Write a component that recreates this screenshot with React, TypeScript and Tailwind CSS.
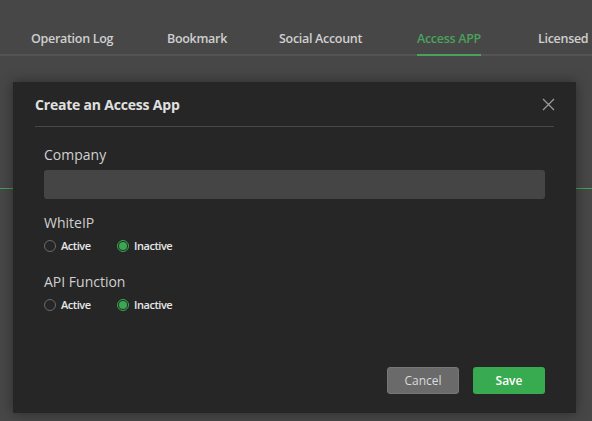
import React from "react";

const font = { fontFamily: '"Open Sans", "Noto Sans", sans-serif' };

function Radio({ checked, label, w }: { checked: boolean; label: string; w: string }) {
  return (
    <label className={"flex items-center gap-[5px] " + w}>
      {checked ? (
        <span className="w-[12px] h-[12px] rounded-full border border-[#3aa852] flex items-center justify-center">
          <span className="w-[8px] h-[8px] rounded-full bg-[#3aa852]" />
        </span>
      ) : (
        <span className="w-[12px] h-[12px] rounded-full border border-[#6a6a6a]" />
      )}
      <span className="text-[11px] font-semibold text-[#e6e6e6] tracking-[-0.45px]">{label}</span>
    </label>
  );
}

export default function App() {
  const tabs: [string, string][] = [
    ["Operation Log", "w-[136px]"],
    ["Bookmark", "w-[112px]"],
    ["Social Account", "w-[138px]"],
    ["Access APP", "w-[121px]"],
    ["Licensed Devices", "w-[120px]"],
  ];
  return (
    <div className="relative w-[592px] h-[421px] overflow-hidden bg-[#474747]" style={font}>
      <div className="flex pl-[31px] pt-[29px] border-b-2 border-[#545454] whitespace-nowrap">
        {tabs.map(([t, w]) => (
          <div key={t} className={"shrink-0 flex " + w}>
            <div
              className={
                "pb-[5px] text-[12.5px] leading-[20px] font-semibold tracking-[-0.3px] " +
                (t === "Access APP"
                  ? "text-[#4aa15c] border-b-2 border-[#4aa15c] -mb-[2px]"
                  : "text-[#cfcfcf]")
              }
            >
              {t}
            </div>
          </div>
        ))}
      </div>
      <div className="mt-[132px] h-px bg-[#42a055]" />

      <div className="absolute left-[13px] top-[82px] w-[563px] h-[331px] bg-[#262626] shadow-[0_0_12px_rgba(0,0,0,0.4)] flex flex-col">
        <div className="mx-[22px] flex items-center justify-between h-[45px] pt-[1px] border-b border-[#474747]">
          <span className="text-[14px] font-bold text-[#e0e0e0] tracking-[-0.2px]">Create an Access App</span>
          <svg width="13" height="13" viewBox="0 0 13 13" className="mr-[-1px]">
            <path d="M1 1 L12 12 M12 1 L1 12" stroke="#9a9a9a" strokeWidth="1.3" />
          </svg>
        </div>
        <div className="px-[31px] pt-[18px] flex flex-col">
          <div className="text-[14px] text-[#d0d0d0] leading-[20px]">Company</div>
          <div className="mt-[5px] h-[29px] rounded-[3px] bg-[#454545]" />
          <div className="mt-[14px] text-[14px] text-[#d0d0d0] leading-[20px]">WhiteIP</div>
          <div className="mt-[5px] flex">
            <Radio checked={false} label="Active" w="w-[73px]" />
            <Radio checked={true} label="Inactive" w="" />
          </div>
          <div className="mt-[17px] text-[14px] text-[#d0d0d0] leading-[20px]">API Function</div>
          <div className="mt-[5px] flex">
            <Radio checked={false} label="Active" w="w-[73px]" />
            <Radio checked={true} label="Inactive" w="" />
          </div>
        </div>
        <div className="mt-auto mb-[19px] px-[31px] flex justify-end gap-[14px]">
          <button className="w-[72px] h-[27px] rounded-[3px] bg-[#6a6a6a] border border-[#777] text-[12px] text-[#dadada]">
            Cancel
          </button>
          <button className="w-[72px] h-[27px] rounded-[3px] bg-[#38aa50] text-[12px] font-semibold text-white">
            Save
          </button>
        </div>
      </div>
    </div>
  );
}
